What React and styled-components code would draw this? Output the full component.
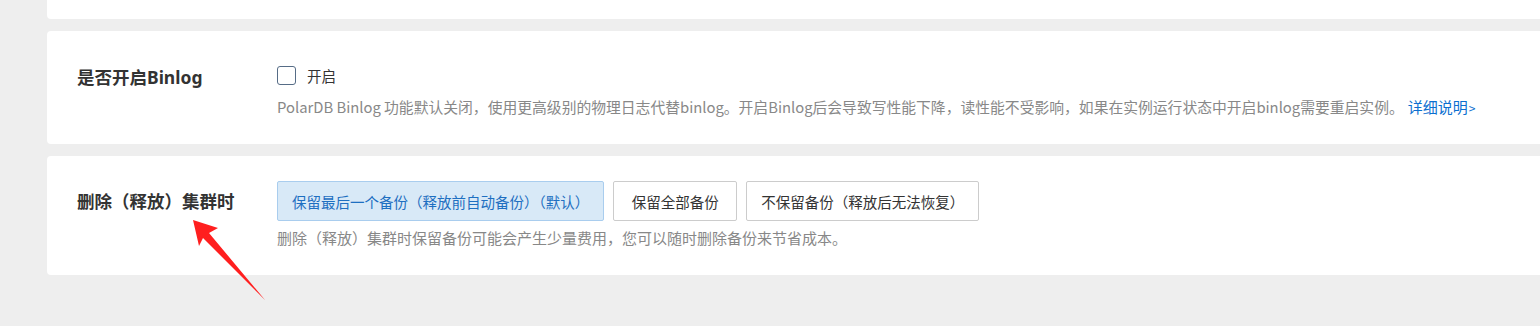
import React from 'react';
import styled, { createGlobalStyle } from 'styled-components';

const GlobalStyle = createGlobalStyle`
  html, body {
    margin: 0;
    padding: 0;
    background: #eeeeee;
    font-family: "Noto Sans", "Noto Sans CJK SC", sans-serif;
  }
`;

const Page = styled.div`
  position: relative;
  width: 1540px;
  height: 326px;
  overflow: hidden;
  padding-left: 47px;
  box-sizing: border-box;
  display: flex;
  flex-direction: column;
  gap: 12px;
`;

const TopCard = styled.div`
  height: 19px;
  background: #fff;
  border-radius: 0 0 0 4px;
`;

const Card = styled.div`
  background: #fff;
  border-radius: 4px 0 0 4px;
  padding: ${(p) => p.$pad};
  display: flex;
  align-items: flex-start;
`;

const Label = styled.div`
  width: 200px;
  padding-left: 30px;
  flex-shrink: 0;
  font-size: 17.5px;
  font-weight: 700;
  color: #333;
  line-height: ${(p) => p.$lh}px;
  margin-top: ${(p) => p.$offset || 0}px;
`;

const Body = styled.div`
  display: flex;
  flex-direction: column;
`;

const Controls = styled.div`
  display: flex;
  align-items: center;
  gap: 9px;
  height: ${(p) => p.$h}px;
`;

const CheckWrap = styled.label`
  display: flex;
  align-items: center;
  gap: 11px;
  font-size: 14.5px;
  color: #333;
`;

const Box = styled.span`
  width: 17px;
  height: 17px;
  border: 1px solid #566c86;
  border-radius: 3px;
  background: #fff;
`;

const Desc = styled.div`
  margin-top: 7px;
  font-family: "Noto Sans CJK SC", "Noto Sans", sans-serif;
  font-size: ${(p) => p.$size || 15}px;
  line-height: 20px;
  height: 20px;
  color: #888;
  white-space: nowrap;
`;

const Link = styled.a`
  color: #0b6fd0;
  text-decoration: none;
  margin-left: 4px;
  font-size: 15px;
  span {
    font-size: 12px;
    margin-left: 1px;
  }
`;

const Option = styled.button`
  height: 40px;
  min-width: 124px;
  padding: 0 14px;
  border: 1px solid ${(p) => (p.$active ? '#a9cdee' : '#cccccc')};
  background: ${(p) => (p.$active ? '#d8e9f7' : '#fff')};
  color: ${(p) => (p.$active ? '#1e6fc1' : '#333')};
  border-radius: 2px;
  font-family: inherit;
  font-size: 14.5px;
  cursor: pointer;
`;

const Arrow = styled.svg`
  position: absolute;
  left: 0;
  top: 0;
  pointer-events: none;
`;

export default function App() {
  return (
    <>
      <GlobalStyle />
      <Page>
        <TopCard />
        <Card $pad="29px 0 27px">
          <Label $lh={30} $offset={2}>是否开启Binlog</Label>
          <Body>
            <Controls $h={30}>
              <CheckWrap>
                <Box />
                开启
              </CheckWrap>
            </Controls>
            <Desc $size={14.8}>
              PolarDB Binlog 功能默认关闭，使用更高级别的物理日志代替binlog。开启Binlog后会导致写性能下降，读性能不受影响，如果在实例运行状态中开启binlog需要重启实例。
              <Link href="#">
                详细说明<span>&gt;</span>
              </Link>
            </Desc>
          </Body>
        </Card>
        <Card $pad="25px 0 27px">
          <Label $lh={40}>删除（释放）集群时</Label>
          <Body>
            <Controls $h={40}>
              <Option $active>保留最后一个备份（释放前自动备份）（默认）</Option>
              <Option>保留全部备份</Option>
              <Option>不保留备份（释放后无法恢复）</Option>
            </Controls>
            <Desc>删除（释放）集群时保留备份可能会产生少量费用，您可以随时删除备份来节省成本。</Desc>
          </Body>
        </Card>
        <Arrow width="1540" height="326" viewBox="0 0 1540 326">
          <polygon
            points="193,220 218,228 209,233 265,300 203,238 199,246"
            fill="#ff1f1f"
          />
        </Arrow>
      </Page>
    </>
  );
}
